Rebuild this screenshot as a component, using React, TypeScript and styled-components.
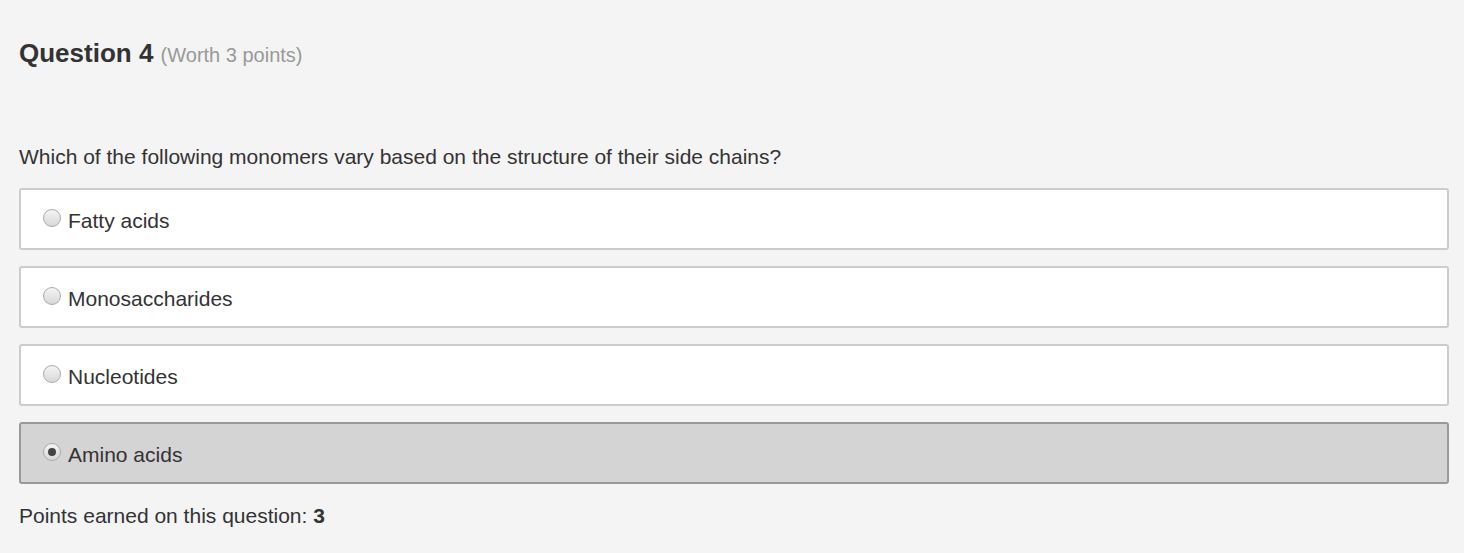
import React from 'react';
import styled, { createGlobalStyle } from 'styled-components';

const GlobalStyle = createGlobalStyle`
    body {
        margin: 0;
        background: #f4f4f4;
        font-family: "Liberation Sans", Arial, sans-serif;
        color: #333;
    }
`;

const options = [
    { label: 'Fatty acids', selected: false },
    { label: 'Monosaccharides', selected: false },
    { label: 'Nucleotides', selected: false },
    { label: 'Amino acids', selected: true },
];

export default function App(): React.ReactElement {
    return (
        <Page>
            <GlobalStyle />
            <Heading>
                Question 4 <Worth>(Worth 3 points)</Worth>
            </Heading>
            <Prompt>Which of the following monomers vary based on the structure of their side chains?</Prompt>
            <OptionList>
                {options.map((o) => (
                    <Option key={o.label} selected={o.selected}>
                        <Radio checked={o.selected} />
                        <OptionLabel>{o.label}</OptionLabel>
                    </Option>
                ))}
            </OptionList>
            <Earned>
                Points earned on this question: <b>3</b>
            </Earned>
        </Page>
    );
}

const Page = styled.div`
    padding: 36px 15px 0 19px;
`;

const Heading = styled.h2`
    margin: 0;
    font-size: 26px;
    font-weight: bold;
    color: #333;
    line-height: 34px;
`;

const Worth = styled.span`
    font-size: 20px;
    font-weight: normal;
    color: #999;
`;

const Prompt = styled.p`
    margin: 72px 0 0;
    font-size: 21px;
    line-height: 26px;
    color: #333;
`;

const OptionList = styled.div`
    display: flex;
    flex-direction: column;
    gap: 16px;
    margin-top: 18px;
`;

const Option = styled.label<{ selected: boolean }>`
    display: flex;
    align-items: center;
    height: 62px;
    box-sizing: border-box;
    padding: 3px 0 0 22px;
    border: 2px solid ${({ selected }) => (selected ? '#999' : '#ccc')};
    border-radius: 3px;
    background: ${({ selected }) => (selected ? '#d4d4d4' : '#fff')};
`;

const Radio = styled.span<{ checked: boolean }>`
    position: relative;
    width: 18px;
    height: 18px;
    box-sizing: border-box;
    border-radius: 50%;
    border: 1px solid #aaa;
    background: linear-gradient(#f4f4f4, #d8d8d8);
    margin: -6px 7px 0 0;
    &::after {
        content: '';
        display: ${({ checked }) => (checked ? 'block' : 'none')};
        position: absolute;
        left: 4px;
        top: 4px;
        width: 8px;
        height: 8px;
        border-radius: 50%;
        background: #444;
    }
`;

const OptionLabel = styled.span`
    font-size: 21px;
    color: #333;
`;

const Earned = styled.p`
    margin: 20px 0 0;
    font-size: 21px;
    color: #333;
    b {
        font-weight: bold;
    }
`;
